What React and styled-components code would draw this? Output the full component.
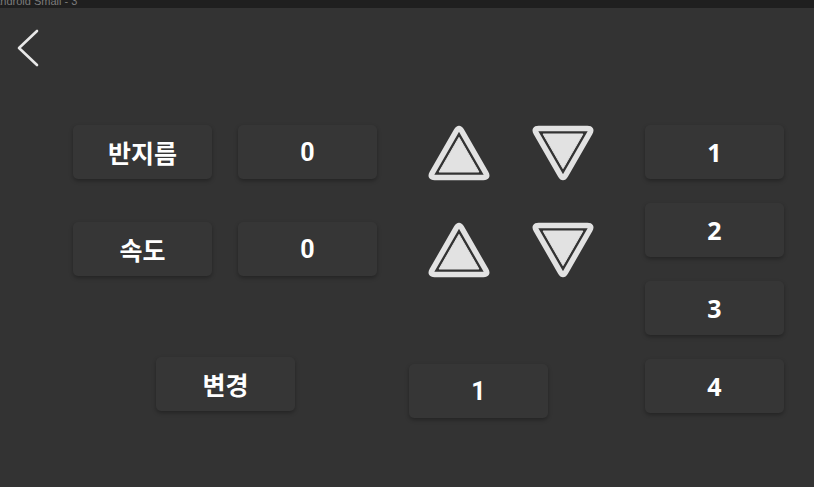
import React from "react";
import styled, { createGlobalStyle } from "styled-components";

const GlobalStyle = createGlobalStyle`
  html, body {
    margin: 0;
    padding: 0;
    background: #333333;
  }
  body {
    font-family: "Noto Sans CJK KR", "Noto Sans", sans-serif;
  }
`;

// rounded outline triangle with a filled triangle inside
const OUTLINE =
  "M33.49 5.64 L57.91 48.17 Q60.4 52.5 55.4 52.5 L6.6 52.5 Q1.6 52.5 4.09 48.17 L28.51 5.64 Q31 1.3 33.49 5.64 Z";

function Arrow({ down }) {
  return (
    <ArrowBox $down={down}>
      <svg width="62" height="56" viewBox="0 0 62 56">
        <path
          d={OUTLINE}
          fill="none"
          stroke="#e2e2e2"
          strokeWidth="5.5"
          strokeLinejoin="round"
        />
        <polygon
          points="31,12.4 11.1,47 50.9,47"
          fill="#e2e2e2"
          stroke="#e2e2e2"
          strokeWidth="1"
          strokeLinejoin="round"
        />
      </svg>
    </ArrowBox>
  );
}

function App() {
  const rows = [
    { label: "반지름", value: 0 },
    { label: "속도", value: 0 },
  ];

  return (
    <>
      <GlobalStyle />
      <Screen>
        <FrameLabel>
          <span>Android Small - 3</span>
        </FrameLabel>
        <BackButton>
          <svg width="24" height="40" viewBox="0 0 24 40">
            <polyline
              points="21,3 3,20 21,37"
              fill="none"
              stroke="#e8e8e8"
              strokeWidth="2.6"
              strokeLinecap="round"
              strokeLinejoin="round"
            />
          </svg>
        </BackButton>
        <Content>
          <LeftArea>
            {rows.map((row) => (
              <ControlRow key={row.label}>
                <Tile>{row.label}</Tile>
                <Tile $font="Roboto">{row.value}</Tile>
                <ArrowGroup>
                  <Arrow />
                  <Arrow down />
                </ArrowGroup>
              </ControlRow>
            ))}
            <BottomRow>
              <Tile>변경</Tile>
              <Tile $font="Roboto" $drop={7}>
                1
              </Tile>
            </BottomRow>
          </LeftArea>
          <PresetColumn>
            {[1, 2, 3, 4].map((n) => (
              <Tile key={n} $font="Noto Sans">
                {n}
              </Tile>
            ))}
          </PresetColumn>
        </Content>
      </Screen>
    </>
  );
}

export default App;

const Screen = styled.div`
  width: 814px;
  height: 487px;
  background: #333333;
  overflow: hidden;
`;

const FrameLabel = styled.div`
  height: 8px;
  background: #1f1f1f;
  display: flex;
  align-items: flex-end;
  padding-bottom: 1px;
  box-sizing: border-box;
  overflow: hidden;
  & span {
    margin-left: -7px;
    font-family: "Liberation Sans", sans-serif;
    font-size: 11px;
    line-height: 11px;
    color: #7c7c7c;
    white-space: nowrap;
  }
`;

const BackButton = styled.div`
  width: 24px;
  height: 40px;
  margin: 20px 0 0 16px;
  cursor: pointer;
  & svg {
    display: block;
  }
`;

const Content = styled.div`
  display: flex;
  align-items: flex-start;
  gap: 51px;
  padding-left: 73px;
  margin-top: 57px;
`;

const LeftArea = styled.div`
  display: flex;
  flex-direction: column;
  gap: 41px;
`;

const ControlRow = styled.div`
  display: flex;
  align-items: flex-start;
  gap: 26px;
  height: 56px;
`;

const ArrowGroup = styled.div`
  display: flex;
  gap: 42px;
  margin-left: 25px;
`;

const ArrowBox = styled.div`
  width: 62px;
  height: 56px;
  cursor: pointer;
  transform: ${(p) => (p.$down ? "scaleY(-1)" : "none")};
  & svg {
    display: block;
  }
`;

const BottomRow = styled.div`
  display: flex;
  align-items: flex-start;
  gap: 114px;
  padding-left: 83px;
  margin-top: 38px;
`;

const PresetColumn = styled.div`
  display: flex;
  flex-direction: column;
  gap: 24px;
`;

const Tile = styled.div`
  width: 139px;
  height: 54px;
  margin-top: ${(p) => p.$drop || 0}px;
  box-sizing: border-box;
  background: #363636;
  border-radius: 5px;
  box-shadow: 0 2px 4px rgba(0, 0, 0, 0.3);
  display: flex;
  align-items: center;
  justify-content: center;
  color: #ffffff;
  font-family: ${(p) => (p.$font ? `"${p.$font}", ` : "")}"Noto Sans CJK KR", sans-serif;
  font-size: 25px;
  font-weight: 700;
  cursor: pointer;
`;
